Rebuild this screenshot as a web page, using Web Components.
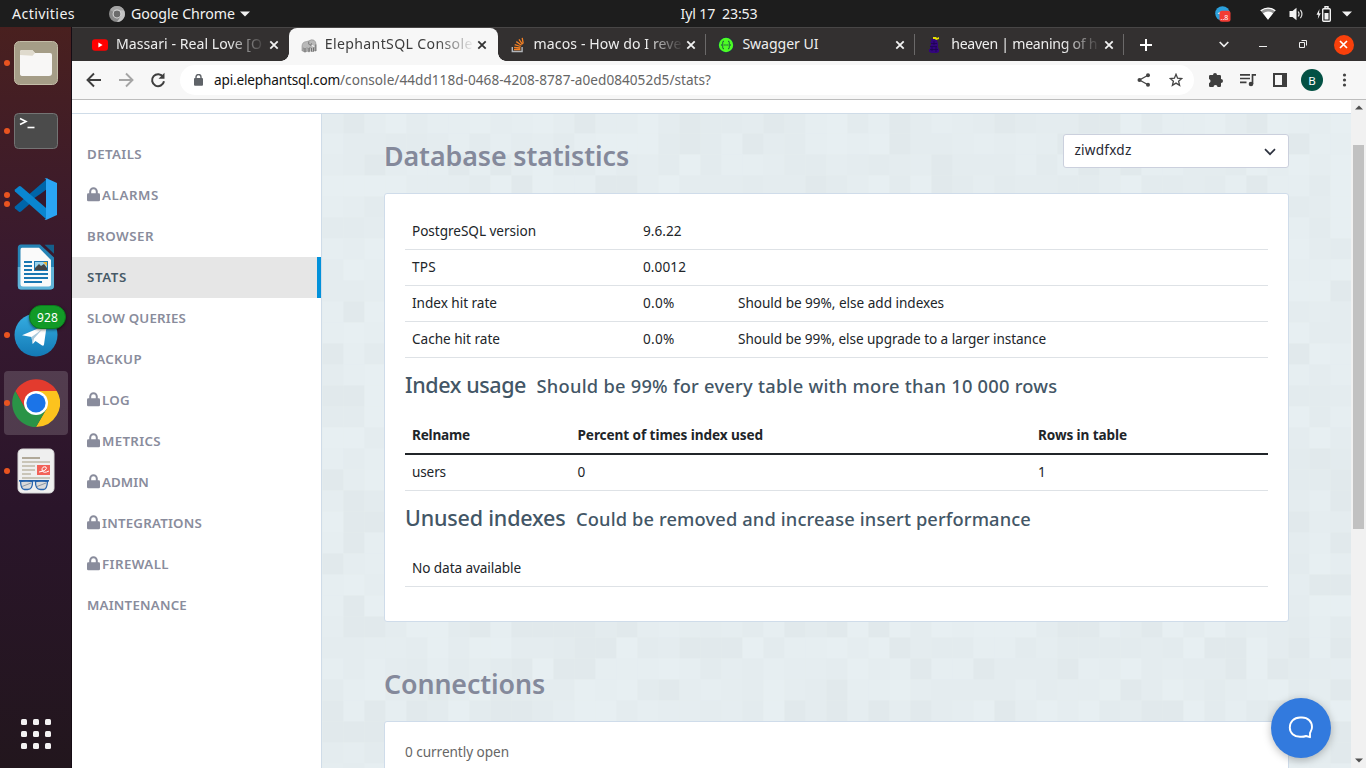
<!DOCTYPE html>
<html lang="en">
<head>
<meta charset="utf-8">
<title>ElephantSQL Console</title>
<style>
html,body{margin:0;padding:0}
body{width:1366px;height:768px;overflow:hidden;font-family:"Noto Sans","Open Sans",sans-serif;font-size:14px}
</style>
</head>
<body>
<desktop-shell></desktop-shell>
<script>
const define = (name, css, html, init) => {
  const t = document.createElement('template');
  customElements.define(name, class extends HTMLElement {
    constructor() {
      super();
      const r = this.attachShadow({mode: 'open'});
      t.innerHTML = '<style>*{box-sizing:border-box}' + css + '</style>' + (typeof html === 'function' ? html(this) : html);
      r.appendChild(t.content.cloneNode(true));
    }
    connectedCallback() { if (init) init(this); }
  });
};

const svg = (w, h, body, vb) => `<svg width="${w}" height="${h}" viewBox="${vb || `0 0 ${w} ${h}`}" fill="none">${body}</svg>`;

const ICONS = {
  youtube: svg(16, 16, '<rect y="2.3" width="16" height="11.4" rx="3" fill="#f00"/><path d="M6.4 5.6v4.8L10.6 8z" fill="#fff"/>'),
  elephant: svg(16, 16, '<path d="M1 11.500Q.6 6 3.500 5 6 4.500 7.500 4q3-2 5.500-.8 2 1.300 2 4.300V14h-1.500v-3.500l-1 .5v3.500H10.500V11l-1.700-.3v4H7V11l-1.500-.5-.5.8V15H3v-3.500L2.300 10.500 1.800 14H1z" fill="#b9b9b9" stroke="#8a8a8a" stroke-width=".6"/><path d="M7.800 4.500q-.8 3 1.200 3.800 1.500-.2 1.500-2M3 11v4M5 11v4M7 11v3.700M8.800 10.500v4M10.500 11v3.500M12.500 10.500v4M14.800 7.500V14" stroke="#666" stroke-width=".8"/><path d="M11 8.600l2.200.8" stroke="#fff"/>'),
  stack: svg(16, 16, '<path d="M2.300 10v4.500h9.800V10" stroke="#b3b6ba" stroke-width="1.400"/><path d="M4 12.500h6.400M4.100 10.300l6.300.7M4.700 7.600l6 1.900M6.300 4.600l5.200 3.600M9 2.400l3.500 5M12.200.8l1 5.800" stroke="#f48024" stroke-width="1.300"/>'),
  swagger: svg(16, 16, '<circle cx="8" cy="8" r="7.700" fill="#173647"/><circle cx="8" cy="8" r="7.200" fill="#4dfc24"/><path d="M6 4.200c-1.700 0-1.200 1.100-1.300 2.200 0 1-.5 1.600-1.300 1.600.8 0 1.300.6 1.300 1.600.1 1.100-.4 2.200 1.300 2.200M10 4.200c1.700 0 1.200 1.100 1.300 2.200 0 1 .5 1.600 1.300 1.600-.8 0-1.300.6-1.300 1.600-.1 1.100.4 2.200-1.300 2.200" stroke="#173647" stroke-width=".9"/><path d="M5.500 8h1.200m.7 0h1.200m.7 0h1.200" stroke="#173647" stroke-width="1.200"/>'),
  urban: svg(16, 16, '<path d="M4 2h4l2 1v1l1 2v5l1 1v3l-2 1H4l-1-1H2v-3h1V9l1-1V6H3V5h1z" fill="#33057d"/><path d="M4 6.500h6M3 9.500h7M3 12.500h8M7 4v4M5 10v4M9 10v5" stroke="#1d0450" stroke-width=".8"/><path d="M6 0h3l1 1 2-1v2l-3 1-1-1H6z" fill="#e8e000"/>'),
  close: svg(10, 10, '<path d="M1.300 1.300l7.400 7.400M8.700 1.300L1.300 8.700" stroke="currentColor" stroke-width="1.800"/>'),
  lock: svg(13, 15, '<path d="M3.200 7V4.600a3.300 3.300 0 0 1 6.600 0V7" stroke="currentColor" stroke-width="2"/><rect y="6.300" width="13" height="8" rx="1.300" fill="currentColor"/>')
};

const menu = [['DETAILS',55],['ALARMS',57,1],['BROWSER',67],['STATS',40,0,1],['SLOW QUERIES',99],['BACKUP',55],['LOG',28,1],['METRICS',59,1],['ADMIN',47,1],['INTEGRATIONS',100,1],['FIREWALL',67,1],['MAINTENANCE',100]];

define('desktop-shell', `
:host{display:grid;grid-template:27px 741px/72px 1294px;width:1366px;height:768px;background:#fff}
system-bar{grid-column:1/3}
chat-button{position:absolute;left:1271px;top:698px}`,
`<system-bar></system-bar><app-dock></app-dock><browser-window></browser-window><chat-button></chat-button>`);

define('system-bar', `
:host{display:grid;grid-template-columns:671px 96px 1fr;height:27px;background:#1d1d1d;color:#f2f2f2;font-size:14.200px;align-items:center}
div{display:flex;align-items:center;height:27px}
.l{padding-left:12px}.l svg{margin:0 6px 0 34px}.l .c{margin:0 0 0 5px}
.m{justify-content:center;padding-bottom:1px}
.r{justify-content:flex-end;padding-right:14px}
svg{display:block;flex:none}`,
`<div class="l"><fit-text w="63">Activities</fit-text>
${svg(16,16,'<circle cx="8" cy="8" r="8" fill="#8a8a8a"/><path d="M8 8L1.100 4A8 8 0 0 1 15 4.200H8z" fill="#a5a5a5"/><path d="M8 16a8 8 0 0 0 7-11.800H8L12 10z" fill="#c2c2c2"/><circle cx="8" cy="8" r="4.400" fill="#e0e0e0"/><circle cx="8" cy="8" r="3.400" fill="#6b6b6b"/>')}
<fit-text w="104">Google Chrome</fit-text><svg class="c" width="10" height="6"><path d="M0 .5h10L5 5.500z" fill="#f2f2f2"/></svg></div>
<div class="m"><fit-text w="77">Iyl 17&nbsp; 23:53</fit-text></div>
<div class="r">
${svg(16,16,'<circle cx="7.500" cy="7.500" r="7.300" fill="#2ba0dc"/><path d="M2.500 7.200l4-1.800v3.600z" fill="#fff"/><rect x="4.500" y="4.700" width="11" height="11" rx="2.500" fill="#f23c34"/><text x="5.500" y="13.500" font-size="7" font-family="Noto Sans" fill="#fff">..8</text>')}
<svg style="margin-left:29px" width="16" height="14"><path d="M.5 3.500Q8-1.500 15.500 3.500L8 12.800z" fill="#999"/><path d="M3 6.200Q8 3 13 6.200L8 12.800z" fill="#fff"/><path d="M.7 3.700Q8-1.500 15.300 3.700" stroke="#fff" stroke-width="1.300" fill="none"/></svg>
<svg style="margin-left:13px" width="16" height="14"><path d="M.5 4h3L7.500.8v12.400L3.500 10h-3z" fill="#f2f2f2"/><path d="M9.200 4.500q1.800 2.500 0 5M11.400 2.800q3.100 4.200 0 8.400" stroke="#ddd" stroke-width="1.200" fill="none"/></svg>
<svg style="margin-left:11px" width="16" height="16"><path d="M3.500 3L.5 8.800h1.900L1.800 13l3-5.800H3z" fill="#f2f2f2"/><path d="M9 2.200V.8h3v1.400" stroke="#f2f2f2" stroke-width="1.400" fill="none"/><rect x="6.700" y="2.700" width="7.600" height="12.600" rx="1" stroke="#f2f2f2" stroke-width="1.400" fill="none"/><rect x="8.500" y="7" width="4" height="6.500" fill="#f2f2f2"/></svg>
<svg style="margin-left:10px" width="10" height="6"><path d="M0 .5h10L5 5.500z" fill="#f2f2f2"/></svg></div>`);

define('app-dock', `
:host{display:flex;flex-direction:column;height:741px;padding-top:2px;background:linear-gradient(#49201f,#371930 35%,#2a152a 65%,#22161d);border-right:1px solid #150c14}
.grid{display:grid;grid-template-columns:repeat(3,6px);gap:6px;margin:214px 0 0 21px}
.grid i{width:6px;height:6px;border-radius:1.500px;background:#f3f1f2}
dock-item{position:relative}
.badge{position:absolute;left:29px;top:4px;width:37px;height:24px;border-radius:12px;background:#129a27;border:1px solid #0c7a1d;color:#fff;font-size:12px;display:flex;align-items:center;justify-content:center;box-shadow:0 1px 3px #0008}`,
`<dock-item dots="1">${svg(46,46,'<rect x="1.500" y="1.500" width="43" height="43" rx="5" fill="#a59d87" stroke="#c4bda8"/><path d="M7 34V11.500Q7 10 9 10h10l3 3h15q2 0 2 2v18q0 3-3 3H10q-3 0-3-2z" fill="#f8f7f6"/><path d="M7 15V11.500Q7 10 9 10h10.500l2.500 3-2.500 2.700z" fill="#dfdacd"/>')}</dock-item>
<dock-item dots="1">${svg(46,38,'<rect x="1.500" y="1.500" width="43" height="35" rx="4" fill="#4b4b4b" stroke="#747474"/><path d="M7 6.500l6 3-6 3" stroke="#fff" stroke-width="1.600"/><path d="M14.500 15.500h7" stroke="#fff" stroke-width="1.600"/>')}</dock-item>
<dock-item dots="2">${svg(44,44,'<path d="M1 31.500l4 3.200q1 .6 2-.2L34 11V1L1 29.500q-.8 1 0 2z" fill="#0065a9"/><path d="M30.500 1.800Q31 1 32.500 1.300L43 6v32l-10.500 4.800q-1.500.2-2-.6 1.500.4 1.500-1.400V3q0-1.700-1.500-1.200z" fill="#2aa5f4"/><path d="M32 13L19 22l13 9z" fill="#35182c"/><path d="M1 12.500l4-3.200q1-.6 2 .2L32 31v11L1 14.500q-.8-1 0-2z" fill="#0a86d0"/>')}</dock-item>
<dock-item dots="0">${svg(38,46,'<path d="M4 .5h19l14 13V42q0 3.500-4 3.500H4Q.8 45.500.8 42V4Q.8.500 4 .5z" fill="#2583b5"/><path d="M.8 23H37v19q0 3.500-4 3.500H4Q.8 45.500.8 42z" fill="#60b3d8"/><path d="M5 3.800h17L34 16v24q0 2.500-2.500 2.500H6Q3.500 42.500 3.500 40V6Q3.500 3.800 5 3.800z" fill="#fafafa"/><path d="M27.500.8H37v9z" fill="#145f8b"/><path d="M7 18h8m-8 4h8m-8 4h8m-8 4h24M7 34h24M7 38h18" stroke="#1a77b2" stroke-width="2"/><rect x="17.500" y="17.500" width="13" height="9" fill="#9ad3ec" stroke="#1a77b2"/><path d="M18 26v-2l4-4 2 2 3-2 3 4v2z" fill="#444"/><path d="M26 18h4v4z" fill="#f2b632"/>')}</dock-item>
<dock-item dots="1">${svg(44,44,'<defs><linearGradient id="t" x2="0" y2="1"><stop stop-color="#36aee2"/><stop offset="1" stop-color="#1379b5"/></linearGradient></defs><circle cx="22" cy="22" r="21.500" fill="url(#t)"/><path d="M8 22.300L31 12.500q2-.6 1.500 1.500L30 31.500q-.5 2-2.300.8L21.500 28l-2.800 3-1.200-7z" fill="#fff"/><path d="M17.500 24L28 16.500 20 25.500l-1.300 5.500z" fill="#a9c9dc"/>')}<span class="badge"><fit-text w="21">928</fit-text></span></dock-item>
<dock-item dots="1" active>${svg(48,48,'<path d="M24 24L3.500 12A24 24 0 0 1 44.800 12z" fill="#e33b2e"/><path d="M24 24L44.800 12A24 24 0 0 1 24 48L34.400 30z" fill="#fcc31e"/><path d="M24 24L34.400 30 24 48A24 24 0 0 1 3.400 12L13.600 30z" fill="#2a9447"/><path d="M13.600 18l10.400-6h20.800L34.400 30 24 24z" fill="#fcc31e"/><path d="M3.500 12h41.300H24L13.600 30z" fill="#e33b2e"/><circle cx="24" cy="24" r="12" fill="#fff"/><circle cx="24" cy="24" r="9.600" fill="#1b74e8"/>')}</dock-item>
<dock-item dots="1">${svg(38,46,'<rect x="1" y="1" width="36" height="44" rx="4.500" fill="#efefef" stroke="#d6d6d6"/><path d="M5 10h18" stroke="#b1a999" stroke-width="2"/><path d="M5 14h28M5 18h13M5 22h13M5 26h9M5 30h28" stroke="#cac5b8" stroke-width="2"/><rect x="20" y="17" width="13" height="10" fill="#f26157"/><path d="M22 24q9-1.500 7-5-4-1-4 3 1 4 7 1" stroke="#fff"/><path d="M3.500 33.500Q9 32 15.500 33.500q.3 8-5 8H7.500Q4 41.500 3.500 33.500zM18.500 33.500Q25 32 30.500 33.500q-.5 8-4 8h-3q-5.300 0-5-8z" stroke="#2a66ae" stroke-width="1.300" fill="#dadada"/><path d="M2 32.800h30" stroke="#1e5da9" stroke-width="1.600"/><path d="M5 38.500l9-3.500M20 38.500l9-3.500" stroke="#8a97a5"/>')}</dock-item>
<div class="grid">${'<i></i>'.repeat(9)}</div>`);

define('dock-item', `
:host{display:grid;grid-template-columns:14px 44px;height:68px;align-items:center;width:72px;flex:none}
.box{display:flex;width:64px;height:64px;margin-left:-10px;border-radius:4px;align-items:center;justify-content:center}
:host([active]) .box{background:#ffffff29}
.dots{position:relative;z-index:1;padding-left:4px;display:grid;gap:3px}
.dots i{width:6px;height:6px;border-radius:50%;background:#e95420}`,
el => `<div class="dots">${'<i></i>'.repeat(+el.getAttribute('dots'))}</div><div class="box"><slot></slot></div>`);

define('browser-window', `
:host{display:grid;grid-template-rows:34px 39px 668px;height:741px}
.page{display:grid;grid-template-columns:1279px 15px;height:668px}
.view{display:grid;grid-template:14px 654px/250px 1029px;overflow:hidden}
.top{grid-column:1/3;background:#fff;border-bottom:1px solid #cfdce8}
`,
`<tab-strip></tab-strip><nav-bar></nav-bar><div class="page"><div class="view"><div class="top"></div><side-menu></side-menu><stats-page></stats-page></div><scroll-track></scroll-track></div>`);

define('tab-strip', `
:host{display:flex;height:34px;background:#333030;border-top:1px solid #484646;padding-left:8px;color:#eee;align-items:stretch}
.ctl{display:flex;align-items:center;flex:1}svg{flex:none;display:block}
.x{width:20px;height:20px;border-radius:50%;background:#f9400b;display:grid;place-items:center;color:#fff;margin-left:26px}`,
`<browser-tab w="146" icon="youtube" label="Massari - Real Love [O" nosep></browser-tab>
<browser-tab w="148" icon="elephant" label="ElephantSQL Console" active></browser-tab>
<browser-tab w="148" icon="stack" label="macos - How do I reve"></browser-tab>
<browser-tab w="76" icon="swagger" label="Swagger UI"></browser-tab>
<browser-tab w="146" icon="urban" label="heaven | meaning of h"></browser-tab>
<div class="ctl"><svg style="margin-left:16px" width="12" height="12"><path d="M6 0v12M0 6h12" stroke="#fff" stroke-width="2"/></svg>
<svg style="margin-left:67px" width="10" height="7"><path d="M.7 1L5 5.300 9.300 1" stroke="#eee" stroke-width="1.700" fill="none"/></svg>
<svg style="margin-left:30px" width="8" height="6"><path d="M0 4.500h8" stroke="#eee" stroke-width="1"/></svg>
<svg style="margin-left:32px" width="9" height="9"><path d="M.5 2.500h5v5h-5zM2.500.500h5v5" stroke="#eee" fill="none"/></svg>
<span class="x">${svg(9,9,'<path d="M1 1l7 7M8 1L1 8" stroke="#fff" stroke-width="1.700"/>')}</span></div>`);

define('browser-tab', `
:host{display:flex;width:208.800px;height:33px;align-items:center;padding-left:12px;position:relative;font-size:14.100px;flex:none}
svg{display:block;flex:none}
.t{width:150px;margin:0 0 2px 8px;overflow:hidden;-webkit-mask:linear-gradient(90deg,#000 112px,#0000 150px)}
:host([label^="Swagger"]) .t{-webkit-mask:none}
.c{margin-left:2.500px;color:#f2f2f2}
:host(:not([active]):not([nosep]))::after{content:"";position:absolute;right:0;top:6px;width:1px;height:21px;background:#6b6969}
:host([active]){background:#f7f7f7;color:#3c3c3c;border-radius:8px 8px 0 0;z-index:1}
:host([active]) .c{color:#333}
:host([active])::before,:host([active])::after{content:"";position:absolute;bottom:0;width:8px;height:8px}
:host([active])::before{left:-8px;background:radial-gradient(circle at 0 0,#333030 7.500px,#f7f7f7 8px)}
:host([active])::after{right:-8px;background:radial-gradient(circle at 100% 0,#333030 7.500px,#f7f7f7 8px)}`,
el => `${ICONS[el.getAttribute('icon')]}<div class="t"><fit-text w="${el.getAttribute('w')}">${el.getAttribute('label')}</fit-text></div><span class="c">${ICONS.close}</span>`);

define('nav-bar', `
:host{display:flex;align-items:center;height:39px;background:#f7f7f7;border-bottom:1px solid #bdbdbd;padding-left:14px;color:#3e3e3e}
svg{display:block;flex:none}
.url{display:flex;align-items:center;width:1014px;height:30px;border-radius:15px;background:#fff;margin-left:14px;padding-left:14px;font-size:13.600px;color:#666}
.url fit-text{margin-bottom:2px}
.url .d{color:#111;margin-left:11px}
.sp{flex:1}
.av{width:22px;height:22px;border-radius:50%;background:#035144;color:#fff;display:grid;place-items:center;font-size:11.500px;margin-left:14px}`,
`${svg(16,16,'<path d="M15 8H2M8 1.500L1.500 8 8 14.500" stroke="#3e3e3e" stroke-width="1.900"/>')}
<svg style="margin-left:16px" width="16" height="16" fill="none"><path d="M1 8h13M8 1.500L14.500 8 8 14.500" stroke="#a5a5a5" stroke-width="1.900"/></svg>
<svg style="margin-left:16px" width="16" height="16" fill="none"><path d="M13.200 5A6 6 0 1 0 14 9.200" stroke="#3e3e3e" stroke-width="2"/><path d="M14.500.8v6h-6z" fill="#3e3e3e"/></svg>
<div class="url"><svg width="9" height="12" fill="none"><path d="M2 5V3a2.500 2.500 0 0 1 5 0v2" stroke="#5f6368" stroke-width="1.400"/><rect y="4" width="9" height="7.800" rx="1" fill="#5f6368"/></svg>
<fit-text class="d" w="126">api.elephantsql.com</fit-text><fit-text w="371">/console/44dd118d-0468-4208-8787-a0ed084052d5/stats?</fit-text><span class="sp"></span>
<svg width="14" height="14"><path d="M11 2.200L2.500 7l8.500 4.800" stroke="#444" stroke-width="1.300" fill="none"/><g fill="#444"><circle cx="11" cy="2.300" r="2"/><circle cx="2.500" cy="7" r="2"/><circle cx="11" cy="11.700" r="2"/></g></svg>
<svg style="margin:0 11px 0 18px" width="14" height="14"><path d="M7 1.300l1.600 3.900 4.200.300-3.200 2.700 1 4.100L7 10.100l-3.600 2.200 1-4.100L1.200 5.500l4.200-.3z" stroke="#444" stroke-width="1.300" fill="none"/></svg></div>
<svg style="margin-left:14px" width="16" height="16"><path d="M1 4.200q0-1.200 1.200-1.200H5a2 2 0 0 1 4 0h2.800Q13 3 13 4.200V7a2 2 0 0 1 0 4v2.800q0 1.200-1.200 1.200H9.500a2 2 0 0 0-4 0H2.200Q1 15 1 13.800v-2.600a2.200 2.200 0 0 0 0-4.200z" fill="#3e3e3e"/></svg>
<svg style="margin-left:16px" width="16" height="14"><path d="M0 1.800h10M0 5.500h10M0 9.300h6.500" stroke="#3e3e3e" stroke-width="1.700"/><path d="M12.500 11V1.800H16" stroke="#3e3e3e" stroke-width="1.700" fill="none"/><circle cx="11" cy="11" r="2.300" fill="#3e3e3e"/></svg>
<svg style="margin-left:17px" width="14" height="14"><rect x="1" y="1" width="12" height="12" stroke="#3e3e3e" stroke-width="2" fill="none"/><path d="M9 1h4v12H9z" fill="#3e3e3e"/></svg>
<span class="av">B</span>
<svg style="margin-left:19px" width="5" height="14" fill="#444"><circle cx="2.500" cy="2" r="1.600"/><circle cx="2.500" cy="7" r="1.600"/><circle cx="2.500" cy="12" r="1.600"/></svg>`);

define('side-menu', `:host{display:block;padding-top:20px;background:#fff;border-right:1px solid #cfdce8}`,
menu.map(([t,w,l,a]) => `<menu-item${l?' locked':''}${a?' active':''}><fit-text w="${w}">${t}</fit-text></menu-item>`).join(''));

define('menu-item', `
:host{display:flex;height:41px;align-items:center;padding:0 0 2px 15px;color:#898c9c;font-size:13.300px;font-weight:560}
:host([active]){background:#e6e6e6;border-right:4px solid #0291da;color:#465967;font-weight:600}
svg{margin-right:2px;flex:none}`,
el => (el.hasAttribute('locked') ? ICONS.lock : '') + '<slot></slot>');

define('stats-page', `
:host{display:block;position:relative;height:654px;padding:20px 62px 0;overflow:hidden;background:#e4ecef}
tile-pattern{position:absolute;inset:0}
.head{display:flex;justify-content:space-between;height:34px;position:relative}
h1{margin:0;color:#84899b;font-weight:560;font-size:26.800px;line-height:44px;position:relative}
.select{display:flex;align-items:center;justify-content:space-between;width:226px;height:34px;background:#fff;border:1px solid #cbd0dd;border-radius:3px;padding:0 12px 4px 10.500px;color:#272832;font-size:13.600px}
.select svg{margin-top:5px}
data-panel{margin-top:25px;height:429px}
.conn{margin-top:40px;line-height:44px}
.last{margin-top:15px;height:80px}
.open{color:#666;font-size:13.600px;line-height:20px}`,
`<tile-pattern></tile-pattern>
<div class="head"><h1><fit-text w="245">Database statistics</fit-text></h1>
<div class="select"><fit-text w="57">ziwdfxdz</fit-text>${svg(12,8,'<path d="M1 1.200L6 6.200l5-5" stroke="#2e3340" stroke-width="1.700"/>')}</div></div>
<data-panel>
<data-row cols="231px 95px 1fr"><fit-text w="124">PostgreSQL version</fit-text><fit-text w="38.500">9.6.22</fit-text></data-row>
<data-row cols="231px 95px 1fr"><fit-text w="24">TPS</fit-text><fit-text w="43">0.0012</fit-text></data-row>
<data-row cols="231px 95px 1fr"><fit-text w="85">Index hit rate</fit-text><fit-text w="31.500">0.0%</fit-text><fit-text w="206">Should be 99%, else add indexes</fit-text></data-row>
<data-row cols="231px 95px 1fr"><fit-text w="88">Cache hit rate</fit-text><fit-text w="31.500">0.0%</fit-text><fit-text w="308">Should be 99%, else upgrade to a larger instance</fit-text></data-row>
<section-title><fit-text w="121">Index usage</fit-text><fit-text slot="note" w="521">Should be 99% for every table with more than 10 000 rows</fit-text></section-title>
<data-row head cols="165.500px 460.500px 1fr"><fit-text w="58">Relname</fit-text><fit-text w="185.500">Percent of times index used</fit-text><fit-text w="89">Rows in table</fit-text></data-row>
<data-row cols="165.500px 460.500px 1fr"><fit-text w="34">users</fit-text><fit-text w="8">0</fit-text><fit-text w="8">1</fit-text></data-row>
<section-title><fit-text w="160.500">Unused indexes</fit-text><fit-text slot="note" w="455">Could be removed and increase insert performance</fit-text></section-title>
<data-row last cols="1fr"><fit-text w="109">No data available</fit-text></data-row>
</data-panel>
<h1 class="conn"><fit-text w="161">Connections</fit-text></h1>
<data-panel class="last"><div class="open"><fit-text w="104">0 currently open</fit-text></div></data-panel>`);

define('data-panel', `:host{display:block;position:relative;background:#fff;border:1px solid #cfdcea;border-radius:3px;padding:20px 20px 0}`, `<slot></slot>`);

define('data-row', `
:host{display:grid;height:36px;align-items:center;padding:0 7px 2px;border-bottom:1px solid #dee2e6;color:#212529;font-size:13.600px}
:host([head]){height:38px;border-bottom:2px solid #212529;font-weight:700}
:host([last]){height:37px}`,
`<slot></slot>`, el => el.style.gridTemplateColumns = el.getAttribute('cols'));

define('section-title', `
:host{display:flex;align-items:baseline;height:59px;line-height:54px;color:#435666;font-size:21.500px;font-weight:540}
.n{font-size:18.300px;margin-left:10.500px}`, `<slot></slot><span class="n"><slot name="note"></slot></span>`);

define('tile-pattern', `:host{display:block}svg{display:block}`, () => {
  let seed = 29, out = '';
  const shades = ['#e7eff2','#e6eef1','#e5edf0','#e4ecef','#e3ebee','#e1e9ec'];
  for (let y = -2; y < 654; y += 21) for (let x = 0; x < 1029; x += 21) {
    seed = (seed * 1103515245 + 12345) % 2147483648;
    out += `<rect x="${x + .5}" y="${y + .5}" width="21" height="21" fill="${shades[Math.floor(seed / 65536) % 6]}"/>`;
  }
  return svg(1029, 654, out);
});

define('scroll-track', `
:host{display:grid;grid-template-rows:45px 384px 1fr;background:#f1f1f1;justify-items:center}
.thumb{width:11px;background:#c1c1c1}
svg{margin-top:5px}.b{align-self:end;margin-bottom:5px}`,
`<svg width="8" height="5"><path d="M0 4.500L4 .5l4 4z" fill="#505050"/></svg><div class="thumb"></div><svg class="b" width="8" height="5"><path d="M0 .5h8l-4 4z" fill="#505050"/></svg>`);

define('chat-button', `:host{display:grid;place-items:center;width:60px;height:60px;border-radius:50%;background:#327ade;box-shadow:0 2px 8px #0004}`,
svg(26,24,'<path d="M22.800 15.200A10 10 0 0 1 22 17v4.200l-4-1.200a13 13 0 0 1-5 .8h-1C6 20.800 1.800 17 1.800 11.500S6 1.500 12 1.500h2c6 0 10 4.200 10 9.500q0 2.300-1.200 4.200z" stroke="#fff" stroke-width="1.900" stroke-linejoin="round"/>'));

/* Text set to a fixed advance width by spreading the difference over its letters. */
define('fit-text', `:host{display:inline-block;white-space:pre;flex:none;justify-self:start}`, `<slot></slot>`, el => {
  const want = +el.getAttribute('w');
  const have = el.getBoundingClientRect().width;
  el.style.letterSpacing = (want - have) / el.textContent.length + 'px';
});
</script>
</body>
</html>
